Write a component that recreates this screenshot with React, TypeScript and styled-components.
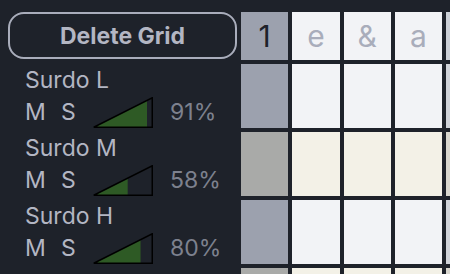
import { Fragment } from 'react';
import styled, { createGlobalStyle } from 'styled-components';

const GlobalStyle = createGlobalStyle`
  html, body {
    margin: 0;
    padding: 0;
    background: #1e222a;
    overflow: hidden;
  }
  body {
    font-family: 'Inter', 'Noto Sans', sans-serif;
  }
`;

type Tone = 'cool' | 'warm';

const tracks: { name: string; volume: number; tone: Tone }[] = [
  { name: 'Surdo L', volume: 91, tone: 'cool' },
  { name: 'Surdo M', volume: 58, tone: 'warm' },
  { name: 'Surdo H', volume: 80, tone: 'cool' },
];

// first column is the downbeat, the last one peeks in from the next beat
const subdivisions = ['1', 'e', '&', 'a', ''];

const Page = styled.div`
  display: grid;
  grid-template-columns: 229px repeat(5, 47.25px);
  grid-template-rows: 48px repeat(4, 64px);
  gap: 4px;
  padding: 12px 0 0 8px;
  width: max-content;
`;

const DeleteButton = styled.button`
  align-self: start;
  height: 47px;
  margin: 0;
  padding: 0;
  box-sizing: border-box;
  border: 2px solid #a9adbb;
  border-radius: 16px;
  background: transparent;
  color: #b3b6c3;
  font-family: 'Inter', sans-serif;
  font-size: 23px;
  font-weight: 700;
  cursor: pointer;
`;

const HeadCell = styled.div<{ $first: boolean; $next: boolean }>`
  display: flex;
  align-items: center;
  justify-content: center;
  font-size: 30px;
  line-height: 48px;
  background: ${(p) => (p.$first ? '#9ca1ae' : p.$next ? '#ccd0d7' : '#f2f3f6')};
  color: ${(p) => (p.$first ? '#1e222a' : '#a9adbb')};
`;

const Controls = styled.div`
  display: flex;
  flex-direction: column;
  padding: 3px 0 0 17px;
  color: #b3b6c3;
  font-size: 23px;
`;

const Name = styled.div`
  line-height: 26px;
`;

const Strip = styled.div`
  display: flex;
  align-items: center;
  height: 30px;
  margin-top: 4px;
`;

const Toggle = styled.span<{ $w: number }>`
  width: ${(p) => p.$w}px;
  line-height: 26px;
`;

const Percent = styled.span`
  margin-left: 17px;
  color: #7d818e;
  line-height: 26px;
`;

const Cell = styled.div<{ $tone: Tone; $first: boolean; $next: boolean }>`
  background: ${(p) => {
    if (p.$tone === 'cool') return p.$first ? '#9ca1ae' : p.$next ? '#d0d3d9' : '#f2f3f6';
    return p.$first ? '#a9aaa8' : p.$next ? '#d9d7cf' : '#f3f1e7';
  }};
`;

function VolumeWedge({ value }: { value: number }) {
  const p = value / 100;
  const x = 0.75 + 58.5 * p;
  const y = 30.25 - 29.5 * p;
  return (
    <svg width="60" height="31" viewBox="0 0 60 31">
      <polygon points={`0.75,30.25 ${x},30.25 ${x},${y}`} fill="#2e5a25" />
      <polygon
        points="0.75,30.25 59.25,0.75 59.25,30.25"
        fill="none"
        stroke="#000"
        strokeWidth="1.5"
      />
    </svg>
  );
}

export default function App() {
  const rows: { name: string; volume: number; tone: Tone }[] = [
    ...tracks,
    { name: '', volume: 0, tone: 'warm' },
  ];
  return (
    <>
      <GlobalStyle />
      <Page>
        <DeleteButton>Delete Grid</DeleteButton>
        {subdivisions.map((s, i) => (
          <HeadCell key={i} $first={i === 0} $next={i === 4}>
            {s}
          </HeadCell>
        ))}
        {rows.map((t, r) => (
          <Fragment key={r}>
            <Controls>
              {t.name && (
                <>
                  <Name>{t.name}</Name>
                  <Strip>
                    <Toggle $w={36}>M</Toggle>
                    <Toggle $w={32}>S</Toggle>
                    <VolumeWedge value={t.volume} />
                    <Percent>{t.volume}%</Percent>
                  </Strip>
                </>
              )}
            </Controls>
            {subdivisions.map((_, i) => (
              <Cell key={i} $tone={t.tone} $first={i === 0} $next={i === 4} />
            ))}
          </Fragment>
        ))}
      </Page>
    </>
  );
}
